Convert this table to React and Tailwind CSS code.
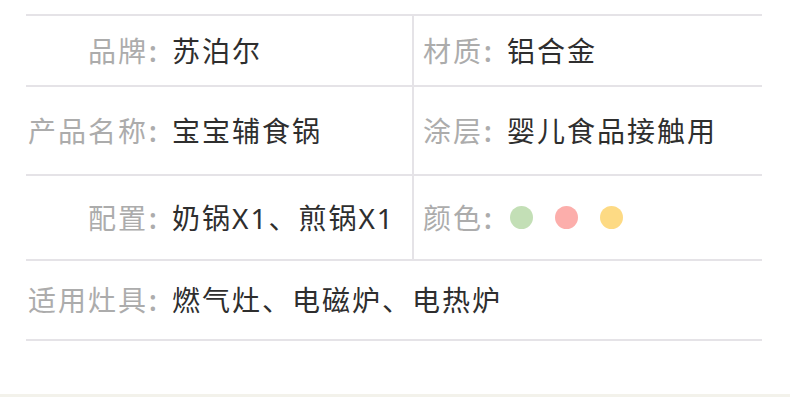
import React from "react";

const rows = [
  { h: "h-[71px]", left: ["品牌", "苏泊尔"], right: ["材质", "铝合金"] },
  { h: "h-[89px]", left: ["产品名称", "宝宝辅食锅"], right: ["涂层", "婴儿食品接触用"] },
  { h: "h-[85px]", left: ["配置", "奶锅X1、煎锅X1"], right: ["颜色", null] },
];

function Label({ text }) {
  return (
    <span className="text-[#acacac] flex">
      {text}
      <span className="inline-block w-[24px] pl-[1px] font-semibold">:</span>
    </span>
  );
}

export default function App() {
  return (
    <div
      className="w-[790px] h-[415px] bg-white overflow-hidden text-[28px] tracking-[2px] leading-none"
      style={{ fontFamily: '"Noto Sans", "Noto Sans CJK SC", sans-serif' }}
    >
      <div className="pt-[14px] pl-[26px] w-[762px]">
        <div className="border-t-2 border-[#e5e3e7]">
          {rows.map((r, i) => (
            <div key={i} className={`flex border-b-2 border-[#e5e3e7] ${r.h}`}>
              <div className="w-[388px] flex items-center border-r-2 border-[#e5e3e7]">
                <div className="w-[146px] flex justify-end">
                  <Label text={r.left[0]} />
                </div>
                <span className="text-[#2e2e2e]">{r.left[1]}</span>
              </div>
              <div className="flex items-center pl-[9px]">
                <Label text={r.right[0]} />
                {r.right[1] ? (
                  <span className="text-[#2e2e2e]">{r.right[1]}</span>
                ) : (
                  <div className="flex gap-[22px] ml-[3px]">
                    <span className="w-[23px] h-[23px] rounded-full bg-[#c3dfb6]" />
                    <span className="w-[23px] h-[23px] rounded-full bg-[#fcaeab]" />
                    <span className="w-[23px] h-[23px] rounded-full bg-[#fdda84]" />
                  </div>
                )}
              </div>
            </div>
          ))}
          <div className="flex items-center h-[80px] border-b-2 border-[#e5e3e7]">
            <div className="w-[146px] flex justify-end">
              <Label text="适用灶具" />
            </div>
            <span className="text-[#2e2e2e]">燃气灶、电磁炉、电热炉</span>
          </div>
        </div>
      </div>
      <div className="mt-[53px] border-t-[3px] border-[#f3f2eb]" />
    </div>
  );
}
